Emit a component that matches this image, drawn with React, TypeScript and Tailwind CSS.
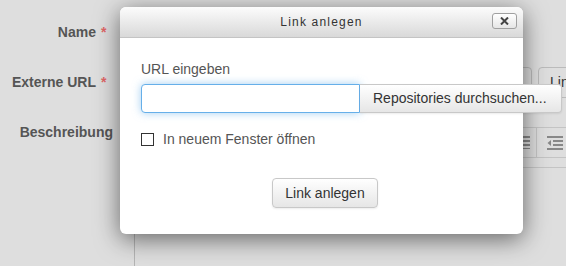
function Label({ text, required }: { text: string; required?: boolean }) {
  return (
    <div className="flex h-[20px] w-[134px] shrink-0 items-center justify-end pr-[21px] text-[14px] font-bold text-[#555]">
      <span>{text}</span>
      {required && <span className="ml-[5px] w-[12px] text-left text-[14px] leading-none text-[#e06666]">*</span>}
    </div>
  );
}

function JustifyIcon() {
  return (
    <svg width="14" height="13" viewBox="0 0 14 13" className="text-[#888]">
      <g fill="currentColor">
        <rect x="0" y="0" width="14" height="2" />
        <rect x="0" y="4" width="14" height="2" />
        <rect x="0" y="8" width="14" height="2" />
        <rect x="0" y="12" width="14" height="1" />
      </g>
    </svg>
  );
}

function IndentIcon() {
  return (
    <svg width="16" height="14" viewBox="0 0 16 14" className="text-[#888]">
      <g fill="currentColor">
        <rect x="0" y="0" width="16" height="2" />
        <rect x="6" y="4" width="10" height="2" />
        <rect x="6" y="8" width="10" height="2" />
        <rect x="0" y="12" width="16" height="2" />
        <path d="M4 4 L0.5 7 L4 10 Z" />
      </g>
    </svg>
  );
}

export default function App() {
  return (
    <div className="relative h-[266px] w-[566px] overflow-hidden bg-[#dedede] font-['Liberation_Sans',Arial,sans-serif]">
      {/* form behind the dialog */}
      <div className="flex flex-col pt-[22px]">
        <div className="flex h-[50px]">
          <Label text="Name" required />
        </div>
        <div className="flex h-[50px]">
          <Label text="Externe URL" required />
          <div className="-mt-[5px] flex h-[31px] gap-[6px]">
            <div className="h-full w-[360px] shrink-0 rounded-[4px] border border-[#bbb]" />
            <div className="h-full w-[32px] shrink-0 rounded-[4px] border border-[#bbb]" />
            <div className="flex h-full w-[90px] shrink-0 items-center rounded-[4px] border border-[#bbb] pl-[11px] text-[14px] text-[#333]">
              Link
            </div>
          </div>
        </div>
        <div className="flex">
          <Label text="Beschreibung" />
          <div className="mt-[5px] flex flex-col">
            <div className="flex h-[31px] border-y border-[#c4c4c4]">
              <div className="w-[373px] shrink-0" />
              <div className="flex w-[30px] shrink-0 items-center justify-center border-r border-[#c4c4c4] pl-[2px]">
                <JustifyIcon />
              </div>
              <div className="flex w-[36px] shrink-0 items-center pl-[10px]">
                <IndentIcon />
              </div>
            </div>
            <div className="h-[10px] w-[440px] border-b border-[#c4c4c4]" />
            <div className="h-[120px] w-[440px] border-l border-[#b4b4b4]" />
          </div>
        </div>
      </div>

      {/* dialog */}
      <div className="absolute left-[120px] top-[7px] flex h-[227px] w-[403px] flex-col rounded-[6px] bg-white shadow-[0_5px_24px_rgba(0,0,0,0.55)]">
        <div className="relative flex h-[31px] shrink-0 items-center justify-center rounded-t-[6px] border-b border-[#c4c4c4] bg-gradient-to-b from-[#fcfcfc] to-[#d9d9d9]">
          <span className="text-[12px] tracking-[1.2px] text-[#333]">Link anlegen</span>
          <button className="absolute right-[6px] top-[6px] flex h-[16px] w-[25px] items-center justify-center rounded-[3px] border border-[#a0a0a0] bg-gradient-to-b from-white to-[#e6e6e6]">
            <svg width="9" height="8" viewBox="0 0 9 8">
              <path d="M1 0.5 L8 7.5 M8 0.5 L1 7.5" stroke="#444" strokeWidth="2" />
            </svg>
          </button>
        </div>
        <div className="flex flex-col px-[21px] pt-[21px]">
          <div className="h-[20px] text-[14px] leading-[20px] text-[#555]">URL eingeben</div>
          <div className="mt-[5px] flex h-[29px]">
            <div className="h-full w-[219px] shrink-0 rounded-l-[4px] border border-[#66afe9] bg-white shadow-[0_0_8px_rgba(102,175,233,0.6)]" />
            <button className="flex h-full w-[202px] shrink-0 items-center rounded-r-[4px] border border-l-0 border-[#c8c8c8] bg-gradient-to-b from-white to-[#e6e6e6] pl-[13px] text-[14px] text-[#333] shadow-[0_1px_2px_rgba(0,0,0,0.08)]">
              Repositories durchsuchen...
            </button>
          </div>
          <div className="mt-[20px] flex h-[13px] items-center">
            <div className="h-[13px] w-[13px] border border-[#333] bg-white" />
            <span className="ml-[9px] text-[14px] text-[#555]">In neuem Fenster öffnen</span>
          </div>
          <div className="mt-[32px] flex pl-[131px]">
            <button className="flex h-[30px] w-[106px] items-center justify-center rounded-[4px] border border-[#c8c8c8] bg-gradient-to-b from-white to-[#e6e6e6] text-[14px] text-[#333] shadow-[0_1px_2px_rgba(0,0,0,0.08)]">
              Link anlegen
            </button>
          </div>
        </div>
      </div>
    </div>
  );
}
